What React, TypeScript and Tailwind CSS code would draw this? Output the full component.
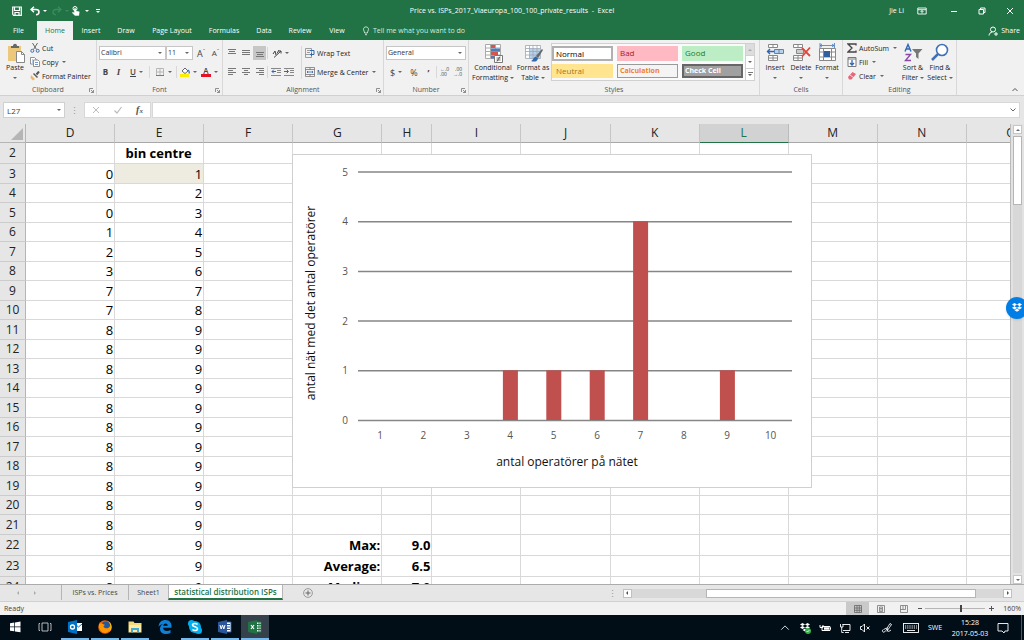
import { useState, type ReactNode } from 'react';

const columns = [
  { name: 'D', width: 'w-[89px]' },
  { name: 'E', width: 'w-[89px]' },
  { name: 'F', width: 'w-[89px]' },
  { name: 'G', width: 'w-[89px]' },
  { name: 'H', width: 'w-[50px]' },
  { name: 'I', width: 'w-[89px]' },
  { name: 'J', width: 'w-[89px]' },
  { name: 'K', width: 'w-[89px]' },
  { name: 'L', width: 'w-[89px]' },
  { name: 'M', width: 'w-[89px]' },
  { name: 'N', width: 'w-[89px]' },
  { name: 'O', width: 'w-[89px]' },
];

const dValues = [0, 0, 0, 1, 2, 3, 7, 7, 8, 8, 8, 8, 8, 8, 8, 8, 8, 8, 8, 8, 8, 8];

const summary: Record<number, [string, string]> = {
  22: ['Max:', '9.0'],
  23: ['Average:', '6.5'],
  24: ['Median:', '7.0'],
};

const ribbonTabs = [
  { name: 'File', width: 'w-[37px]' },
  { name: 'Home', width: 'w-9' },
  { name: 'Insert', width: 'w-9' },
  { name: 'Draw', width: 'w-[34px]' },
  { name: 'Page Layout', width: 'w-[58px]' },
  { name: 'Formulas', width: 'w-[46px]' },
  { name: 'Data', width: 'w-[34px]' },
  { name: 'Review', width: 'w-[38px]' },
  { name: 'View', width: 'w-9' },
];

const sheets = [
  { name: 'ISPs vs. Prices', width: 'w-[67px]' },
  { name: 'Sheet1', width: 'w-10' },
  { name: 'statistical distribution ISPs', width: 'w-[115px]' },
];

// number of networks for each operator count, 1 to 10
const bars = [0, 0, 0, 1, 1, 1, 4, 0, 1, 0];

function Caret({ className = 'text-[#666]' }: { className?: string }) {
  return (
    <svg viewBox="0 0 4 2" className={`w-1 h-0.5 shrink-0 ${className}`}>
      <path d="M0 0h4L2 2z" fill="currentColor" />
    </svg>
  );
}

function Icon({ size = 'size-3', box = 12, children }: { size?: string; box?: number; children: ReactNode }) {
  return (
    <svg viewBox={`0 0 ${box} ${box}`} className={`shrink-0 ${size}`} fill="none" stroke="currentColor">
      {children}
    </svg>
  );
}

function Group({ label, width, launcher = false, children }: { label: string; width: string; launcher?: boolean; children: ReactNode }) {
  return (
    <section className={`flex flex-col shrink-0 border-r border-[#d8d8d8] ${width}`}>
      <div className="flex h-[45px]">{children}</div>
      <div className="relative h-[11px] text-center leading-[11px] text-[#555]">
        {label}
        {launcher && (
          <button type="button" aria-label={`${label} settings`} className="absolute right-0.5 top-1">
            <Icon size="size-[5px]" box={5}>
              <path d="M.5 4V.5H4M2 2l2.5 2.5M4.5 2v2.5H2" stroke="#777" strokeWidth=".8" />
            </Icon>
          </button>
        )}
      </div>
    </section>
  );
}

function BigButton({ lines, width, caretBelow = false, icon }: { lines: string[]; width: string; caretBelow?: boolean; icon: ReactNode }) {
  return (
    <button type="button" className={`flex flex-col items-center shrink-0 pt-[3px] ${width}`}>
      {icon}
      {lines.map((line, i) => (
        <span key={line} className="flex items-center gap-0.5 leading-[10px] whitespace-nowrap">
          {line}
          {!caretBelow && i === lines.length - 1 && <Caret />}
        </span>
      ))}
      {caretBelow && <span className="flex h-[9px] items-center"><Caret /></span>}
    </button>
  );
}

function SmallButton({ label, caret = false, icon }: { label: string; caret?: boolean; icon: ReactNode }) {
  return (
    <button type="button" className="flex h-[14px] items-center gap-0.5 whitespace-nowrap">
      {icon}
      {label}
      {caret && <span className="ml-0.5 flex"><Caret /></span>}
    </button>
  );
}

function Tool({ label, width = 'w-[13px]', active = false, children }: { label: string; width?: string; active?: boolean; children: ReactNode }) {
  return (
    <button
      type="button"
      aria-label={label}
      className={`flex h-[14px] items-center justify-center gap-[3px] shrink-0 text-[#444] ${width} ${active ? 'bg-[#c6c6c6]' : ''}`}
    >
      {children}
    </button>
  );
}

function Select({ label, value, width }: { label: string; value: string; width: string }) {
  return (
    <div className={`relative h-[14px] shrink-0 ${width}`}>
      <select aria-label={label} className="block size-full appearance-none border border-[#c6c6c6] bg-white pl-px leading-3 text-[#333]">
        <option>{value}</option>
      </select>
      <span className="pointer-events-none absolute right-1 top-1.5 flex"><Caret /></span>
    </div>
  );
}

function Separator() {
  return <span className="mx-px h-3 w-px shrink-0 bg-[#d8d8d8]" />;
}

function Lines({ d }: { d: string }) {
  return (
    <Icon size="size-2.5" box={10}>
      <path d={d} stroke="#777" />
    </Icon>
  );
}

function TitleBar() {
  return (
    <header className="grid h-[21px] shrink-0 grid-cols-[1fr_auto_1fr] items-center">
      <div className="flex items-center pl-3">
        <button type="button" aria-label="Save" className="w-[18px]">
          <Icon size="size-2.5" box={10}>
            <path d="M.7 1h8.6v8.3H1.7l-1-1zM2.500 1v3.500h5V1M3 9V6.500h4V9" strokeWidth="1.2" />
          </Icon>
        </button>
        <button type="button" aria-label="Undo" className="flex w-[22px] items-center gap-[3px]">
          <Icon size="size-2.5" box={10}>
            <path d="M4 .8 1 3.500l3 2.700M1.200 3.500H6c4 0 4 5 0 5.300" strokeWidth="1.5" />
          </Icon>
          <Caret className="text-white" />
        </button>
        <button type="button" aria-label="Redo" className="flex w-[19px] items-center gap-[3px] text-[#3e8a60]">
          <Icon size="size-2.5" box={10}>
            <path d="m6 .8 3 2.700-3 2.700M8.800 3.500H4c-4 0-4 5 0 5.300" strokeWidth="1.3" />
          </Icon>
          <Caret className="text-[#3e8a60]" />
        </button>
        <button type="button" aria-label="Touch mode" className="flex w-[25px] items-center gap-1">
          <Icon size="size-2.5" box={10}>
            <circle cx="4" cy="2.5" r="2" />
            <path d="M3.300 2.500h1.500V5l3.500.8-.5 3.700H4L1.200 6.800l.8-.6 1.300.8z" fill="currentColor" strokeWidth=".4" />
          </Icon>
          <Caret className="text-white" />
        </button>
        <button type="button" aria-label="Customize" className="flex flex-col items-center gap-px">
          <span className="h-px w-1 bg-white" />
          <Caret className="text-white" />
        </button>
      </div>
      <h1>Price vs. ISPs_2017_Viaeuropa_100_100_private_results&nbsp; -&nbsp; Excel</h1>
      <div className="flex items-center justify-end">
        <span>Jie Li</span>
        <button type="button" aria-label="Ribbon options" className="flex w-9 justify-center">
          <Icon size="size-2.5" box={10}>
            <path d="M.8 2h8.400v6H.8zM.8 3.700h8.400M5 7.500v-3M3.500 6 5 4.500 6.500 6" strokeWidth=".9" />
          </Icon>
        </button>
        <button type="button" aria-label="Minimize" className="flex w-7 justify-center">
          <Icon size="size-2" box={8}><path d="M1 4.500h6" /></Icon>
        </button>
        <button type="button" aria-label="Restore" className="flex w-7 justify-center">
          <Icon size="size-2" box={8}><path d="M1 2.500h4.500V7H1zM2.500 2.500V1H7v4.500H5.500" /></Icon>
        </button>
        <button type="button" aria-label="Close" className="flex w-7 justify-center">
          <Icon size="size-2" box={8}><path d="m1 1 6 6M7 1 1 7" /></Icon>
        </button>
      </div>
    </header>
  );
}

function RibbonTabs() {
  return (
    <nav className="flex h-[19px] shrink-0 items-stretch">
      {ribbonTabs.map((tab) => (
        <button
          key={tab.name}
          type="button"
          className={`shrink-0 whitespace-nowrap ${tab.width} ${tab.name === 'Home' ? 'bg-[#f1f1f1] text-[#217346]' : ''}`}
        >
          {tab.name}
        </button>
      ))}
      <button type="button" className="ml-1.5 flex items-center gap-0.5 text-[#d8eadf]">
        <Icon size="size-2.5" box={10}>
          <path d="M3.700 7C3.700 5.500 2.500 5 2.500 3.300c0-3.200 5-3.200 5 0C7.500 5 6.300 5.500 6.300 7zM4 8.700h2" strokeWidth=".9" />
        </Icon>
        Tell me what you want to do
      </button>
      <button type="button" className="ml-auto flex items-center gap-[3px] pr-1">
        <Icon size="size-2.5" box={10}>
          <circle cx="5" cy="3.5" r="2.5" />
          <path d="M1 9.500c.2-2 1.500-3.200 3.200-3.500M6 8h4M8 6v4" />
        </Icon>
        Share
      </button>
    </nav>
  );
}

function ClipboardGroup() {
  return (
    <Group label="Clipboard" width="w-[97px]" launcher>
      <BigButton
        lines={['Paste']}
        width="w-[30px]"
        caretBelow
        icon={
          <svg viewBox="0 0 20 20" className="size-5 shrink-0">
            <path d="M3 3h13v15H3z" fill="#edc77b" />
            <path d="M6 5V3h2C8 0 12 0 12 3h2v2z" fill="#666" />
            <path d="M11.500 8.500h5l3 3v8h-8z" fill="#fff" stroke="#888" />
            <path d="M16.500 8.500v3h3" fill="none" stroke="#888" />
          </svg>
        }
      />
      <div className="flex flex-col items-start pt-px">
        <SmallButton
          label="Cut"
          icon={
            <Icon size="size-2.5" box={10}>
              <path d="m2.500 0 4 6.500M7.500 0l-4 6.500" stroke="#666" />
              <circle cx="2.3" cy="7.8" r="1.5" stroke="#3f6fae" />
              <circle cx="7.7" cy="7.8" r="1.5" stroke="#3f6fae" />
            </Icon>
          }
        />
        <SmallButton
          label="Copy"
          caret
          icon={
            <Icon size="size-2.5" box={10}>
              <path d="M.5.5h4l1.500 1.500v5H.5z" fill="#fff" stroke="#777" strokeWidth=".8" />
              <path d="M3.500 3h4.500l1.500 1.500v5h-6z" fill="#fff" stroke="#777" strokeWidth=".8" />
              <path d="M5 5.500h3M5 7.500h3M2 3h1M2 5h1" stroke="#4d7ebf" strokeWidth=".8" />
            </Icon>
          }
        />
        <SmallButton
          label="Format Painter"
          icon={
            <Icon size="size-2.5" box={10}>
              <path d="m1 4 4 4-2 1.500L.5 7z" fill="#edb765" stroke="none" />
              <path d="m3 3 4 4 1-1-4-4z" fill="#555" stroke="none" />
              <path d="m6.500 3.500 2.500-3" stroke="#555" strokeWidth="2" />
            </Icon>
          }
        />
      </div>
    </Group>
  );
}

function FontGroup() {
  return (
    <Group label="Font" width="w-[126px]" launcher>
      <div className="flex flex-col gap-[5px] pl-0.5 pt-1.5">
        <div className="flex">
          <Select label="Font family" value="Calibri" width="w-[67px]" />
          <Select label="Font size" value="11" width="w-[27px]" />
          <Tool label="Increase font size" width="w-4">
            <span className="text-[9px]">A</span><span className="-ml-[3px] mb-1 text-[6px] text-[#3f6fae]">ˆ</span>
          </Tool>
          <Tool label="Decrease font size">
            <span className="text-[8px]">A</span><span className="-ml-[3px] mb-1 text-[6px] text-[#3f6fae]">ˇ</span>
          </Tool>
        </div>
        <div className="flex items-center">
          <Tool label="Bold"><b className="text-[8px]">B</b></Tool>
          <Tool label="Italic"><i className="font-['Liberation_Serif'] text-[9px] font-bold">I</i></Tool>
          <Tool label="Underline" width="w-[23px]"><span className="text-[8px] font-semibold underline">U</span><Caret /></Tool>
          <Separator />
          <Tool label="Borders" width="w-6">
            <Icon size="size-2.5" box={10}>
              <path d="M1.500 1.500h7v7h-7zM5 1.500v7M1.500 5h7" stroke="#aaa" strokeWidth=".8" />
              <path d="M1 8.500h8" stroke="#777" />
            </Icon>
            <Caret />
          </Tool>
          <Separator />
          <Tool label="Fill color" width="w-[21px]">
            <Icon size="size-2.5" box={10}>
              <path d="m2 4 3-3 3 3-3 2.500z" fill="#fff" stroke="#666" />
              <path d="M8 3c1.500 1 1.500 2 1 3.500" stroke="#3f6fae" strokeWidth="1.3" />
              <path d="M0 8.500h9" stroke="#ffed00" strokeWidth="3" />
            </Icon>
            <Caret />
          </Tool>
          <Tool label="Font color" width="w-[21px]">
            <span className="w-2.5 border-b-[3px] border-[#e81123] text-[8px] leading-[7px] font-semibold">A</span>
            <Caret />
          </Tool>
        </div>
      </div>
    </Group>
  );
}

function AlignmentGroup() {
  return (
    <Group label="Alignment" width="w-[161px]" launcher>
      <div className="flex flex-col gap-[5px] pl-0.5 pt-1.5">
        <div className="flex items-center">
          <Tool label="Top align" width="w-[14px]"><Lines d="M1 1.500h8M2 3.500h6M1 5.500h8" /></Tool>
          <Tool label="Middle align" width="w-[14px]"><Lines d="M1 2.500h8M1 4.500h8M1 6.500h8" /></Tool>
          <Tool label="Bottom align" active><Lines d="M1 4.500h8M2 6.500h6M1 8.500h8" /></Tool>
          <Separator />
          <Tool label="Orientation" width="w-[23px]">
            <Icon size="size-2.5" box={10}>
              <path d="m1 6 2-3 1 4M5 5.500 7 2M2 9.500 9 3M6.500 3H9v2.500" stroke="#444" />
            </Icon>
            <Caret />
          </Tool>
        </div>
        <div className="flex items-center">
          <Tool label="Align left" width="w-[14px]"><Lines d="M1 1.500h8M1 3.500h5M1 5.500h8M1 7.500h5" /></Tool>
          <Tool label="Center" width="w-[14px]"><Lines d="M1 1.500h8M3 3.500h4M1 5.500h8M3 7.500h4" /></Tool>
          <Tool label="Align right"><Lines d="M1 1.500h8M4 3.500h5M1 5.500h8M4 7.500h5" /></Tool>
          <Separator />
          <Tool label="Decrease indent">
            <Icon size="size-2.5" box={10}>
              <path d="M0 1.500h10M6 3.500h4M6 5.500h4M0 8.500h10" stroke="#888" />
              <path d="M5 4.500H1M2.800 2.700 1 4.500l1.800 1.800" stroke="#2f67b1" />
            </Icon>
          </Tool>
          <Tool label="Increase indent">
            <Icon size="size-2.5" box={10}>
              <path d="M0 1.500h10M6 3.500h4M6 5.500h4M0 8.500h10" stroke="#888" />
              <path d="M0 4.500h4M2.700 2.700l1.800 1.800-1.800 1.800" stroke="#2f67b1" />
            </Icon>
          </Tool>
        </div>
      </div>
      <div className="mt-1.5 ml-1.5 flex h-[33px] flex-col items-start gap-[5px] border-l border-[#d8d8d8] pl-[3px]">
        <SmallButton
          label="Wrap Text"
          icon={
            <Icon size="size-2.5" box={10}>
              <path d="M.5.5h6v9h-6zM2 2.500h3M2 4.500h3M.5 6.500h6" stroke="#888" strokeWidth=".8" />
              <path d="M5 2.500h4v4H5.500M7 5 5.500 6.500 7 8" stroke="#2f67b1" />
            </Icon>
          }
        />
        <SmallButton
          label="Merge & Center"
          caret
          icon={
            <Icon size="size-2.5" box={10}>
              <path d="M.5.5h9v9h-9zM.5 2.500h9M.5 7.500h9M5 .5v2M5 7.500v2" stroke="#777" strokeWidth=".8" />
              <path d="M2 5h6M3 4 2 5l1 1M7 4l1 1-1 1" stroke="#2f67b1" strokeWidth=".8" />
            </Icon>
          }
        />
      </div>
    </Group>
  );
}

function NumberGroup() {
  return (
    <Group label="Number" width="w-[85px]" launcher>
      <div className="flex flex-col gap-[5px] pl-0.5 pt-1.5">
        <Select label="Number format" value="General" width="w-[80px]" />
        <div className="flex items-center">
          <Tool label="Accounting format" width="w-5"><span className="text-[9px]">$</span><Caret /></Tool>
          <Tool label="Percent style" width="w-4"><span className="text-[9px]">%</span></Tool>
          <Tool label="Comma style"><b className="text-[9px] leading-[9px]">’</b></Tool>
          <Separator />
          <Tool label="Increase decimal">
            <span className="text-left text-[5px] leading-[5px]"><span className="text-[#2f67b1]">←</span>.0<br />.00</span>
          </Tool>
          <Tool label="Decrease decimal">
            <span className="text-right text-[5px] leading-[5px]">.00<br /><span className="text-[#2f67b1]">→</span>.0</span>
          </Tool>
        </div>
      </div>
    </Group>
  );
}

function StylesGroup() {
  return (
    <Group label="Styles" width="w-[291px]">
      <BigButton
        lines={['Conditional', 'Formatting']}
        width="w-12"
        icon={
          <svg viewBox="0 0 20 20" className="size-5 shrink-0" fill="none">
            <path d="M2.500 1.500h15v14h-15z" fill="#fff" />
            <path d="M2.500 1.500h15v14h-15zM2.500 5h15M2.500 8.500h15M2.500 12h15M7.500 1.500v14M12.500 1.500v14" stroke="#aaa" />
            <path d="M8 2h4v3H8zM8 9h7v3H8z" fill="#d9534a" />
            <path d="M8 5.500h9v3H8zM8 12.500h3v3H8z" fill="#4a7ebb" />
            <path d="M11.500 12.500h8v7h-8z" fill="#fff" stroke="#777" />
            <path d="M13.500 15h4M13.500 17h4M17 13.500l-3 5" stroke="#444" strokeWidth=".8" />
          </svg>
        }
      />
      <BigButton
        lines={['Format as', 'Table']}
        width="w-8"
        icon={
          <svg viewBox="0 0 20 20" className="size-5 shrink-0" fill="none">
            <path d="M2.500 2.500h15v13h-15z" fill="#fff" />
            <path d="M7 6h10v10H7z" fill="#b9d1ea" />
            <path d="M2.500 2.500h15v13h-15zM2.500 5.500h15M2.500 8.500h15M2.500 12h15M6.500 2.500v13M10 2.500v13M14 2.500v13" stroke="#9aa7b5" strokeWidth=".8" />
            <path d="m13 13 6-7 1 1-5 8z" fill="#666" />
            <path d="M8 18c2 0 2-4 5-4.500l2 2C14 19 11 19 8 18z" fill="#2f67b1" />
          </svg>
        }
      />
      <div className="ml-0.5 mt-[3px] flex h-[38px] flex-1 mr-1 border border-[#d0d0d0] bg-[#fafafa]">
        <div className="grid flex-1 grid-cols-3 grid-rows-2 gap-x-1 gap-y-[3px] py-0.5 pr-0.5 text-[8px] leading-3">
          <button type="button" className="border-2 border-[#b0b0b0] bg-white pl-0.5 text-left text-black">Normal</button>
          <button type="button" className="bg-[#ffb9c2] pl-[3px] text-left text-[#a21c2a]">Bad</button>
          <button type="button" className="bg-[#bdedc4] pl-[3px] text-left text-[#1e7a28]">Good</button>
          <button type="button" className="bg-[#ffe58f] pl-1 text-left text-[#a8731a]">Neutral</button>
          <button type="button" className="border border-[#9a9a9a] bg-[#f4f4f4] pl-0.5 text-left text-[7px] font-bold text-[#f08030]">Calculation</button>
          <button type="button" className="border-2 border-[#666] bg-[#a0a0a0] pl-px text-left text-[7px] leading-2.5 font-bold text-white">Check Cell</button>
        </div>
        <div className="flex w-[9px] flex-col border-l border-[#d0d0d0]">
          <button type="button" aria-label="Previous styles" className="flex flex-1 items-center justify-center bg-[#ddd]"><Caret className="rotate-180 text-[#aaa]" /></button>
          <button type="button" aria-label="Next styles" className="flex flex-1 items-center justify-center border-y border-[#d0d0d0] bg-white"><Caret /></button>
          <button type="button" aria-label="More styles" className="flex flex-1 flex-col items-center justify-center gap-px bg-white">
            <span className="h-px w-[5px] bg-[#777]" />
            <Caret />
          </button>
        </div>
      </div>
    </Group>
  );
}

function CellsGroup() {
  return (
    <Group label="Cells" width="w-[83px]">
      <div className="flex pl-0.5">
        <BigButton
          lines={['Insert']}
          width="w-[26px]"
          caretBelow
          icon={
            <svg viewBox="0 0 20 20" className="size-5 shrink-0" fill="none" stroke="#888">
              <path d="M3.500 1.500h9v3h-9zM8 1.500v3M3.500 12.500h9v5h-9zM8 12.500v5M3.500 15h9" fill="#fff" />
              <path d="M9.500 6.500h9v4h-9zM14 6.500v4" fill="#b9d1ea" stroke="#5b84b5" />
              <path d="M9 8.500H2M5 6 2.500 8.500 5 11" stroke="#2f67b1" strokeWidth="1.4" />
            </svg>
          }
        />
        <BigButton
          lines={['Delete']}
          width="w-[26px]"
          caretBelow
          icon={
            <svg viewBox="0 0 20 20" className="size-5 shrink-0" fill="none" stroke="#888">
              <path d="M2.500 1.500h9v3h-9zM7 1.500v3M2.500 12.500h9v5h-9zM7 12.500v5M2.500 15h9" fill="#fff" />
              <path d="M5.500 6.500h7v4h-7z" fill="#ccc" />
              <path d="m11 5 8 8M19 4.500l-8 9" stroke="#e0453a" strokeWidth="1.8" />
            </svg>
          }
        />
        <BigButton
          lines={['Format']}
          width="w-[26px]"
          caretBelow
          icon={
            <svg viewBox="0 0 20 20" className="size-5 shrink-0" fill="none" stroke="#888">
              <path d="M2.500 5.500h16v12h-16zM2.500 9h16M2.500 14h16M6.500 5.500v12M14.500 5.500v12" fill="#fff" />
              <path d="M7 8h6v6H7z" fill="#2f5f9f" stroke="none" />
              <path d="M3 2.500h14M5 1 3 2.500 5 4M15 1l2 1.500L15 4M3 0v5M17.500 0v5" stroke="#3f7ac0" strokeWidth=".8" />
            </svg>
          }
        />
      </div>
    </Group>
  );
}

function EditingGroup() {
  return (
    <Group label="Editing" width="w-[114px]">
      <div className="flex w-14 flex-col items-start pl-1 pt-px">
        <SmallButton
          label="AutoSum"
          caret
          icon={<Icon size="size-2.5" box={10}><path d="M9 2.500V1H1l4 4-4 4h8V7.500" stroke="#444" strokeWidth="1.3" /></Icon>}
        />
        <SmallButton
          label="Fill"
          caret
          icon={
            <Icon size="size-2.5" box={10}>
              <path d="M1 .5h8v9H1zM1 2h8" stroke="#777" fill="#fff" />
              <path d="M5 3v5M3 6l2 2 2-2" stroke="#2f67b1" strokeWidth="1.3" />
            </Icon>
          }
        />
        <SmallButton
          label="Clear"
          caret
          icon={
            <Icon size="size-2.5" box={10}>
              <path d="m1 6 4.500-5L9 3 4.500 8.500H2z" fill="#e6677c" stroke="none" />
              <path d="M3 4l3.500 2.500" stroke="#fff" strokeWidth=".7" />
            </Icon>
          }
        />
      </div>
      <BigButton
        lines={['Sort &', 'Filter']}
        width="w-7"
        icon={
          <svg viewBox="0 0 20 20" className="size-5 shrink-0" fill="none">
            <path d="m2 8.500 3-7 3 7M3 6h4" stroke="#2f67b1" strokeWidth="1.4" />
            <path d="M2.500 11.500h5l-5 6h5.500" stroke="#8a49a8" strokeWidth="1.4" />
            <path d="M9 6h10.500l-4 4.500V16L13 14v-3.500z" fill="#777" />
          </svg>
        }
      />
      <BigButton
        lines={['Find &', 'Select']}
        width="w-[26px]"
        icon={
          <svg viewBox="0 0 20 20" className="size-5 shrink-0" fill="none" stroke="#3f72b5">
            <circle cx="12" cy="7" r="5.5" fill="#fff" strokeWidth="1.6" />
            <path d="m8 11-6 6" strokeWidth="2.5" />
          </svg>
        }
      />
    </Group>
  );
}

function FormulaBar() {
  return (
    <div className="flex h-7 shrink-0 items-center bg-[#e6e6e6] pl-[3px] pr-1 text-[#555]">
      <div className="relative h-4 w-[62px] shrink-0">
        <input aria-label="Name box" defaultValue="L27" className="block size-full border border-[#d0d0d0] bg-white pl-[3px] text-[8px] text-[#444]" />
        <span className="pointer-events-none absolute right-1 top-[7px] flex"><Caret /></span>
      </div>
      <span className="w-[19px] shrink-0 text-center text-[9px] text-[#999]">⋮</span>
      <div className="flex h-4 w-[67px] shrink-0 items-center justify-around border border-[#d8d8d8] bg-white">
        <button type="button" aria-label="Cancel"><Icon size="size-2" box={8}><path d="m1 1 6 6M7 1 1 7" stroke="#bbb" /></Icon></button>
        <button type="button" aria-label="Enter"><Icon size="size-2" box={8}><path d="m.5 4.500 2.500 2.500 4.500-6" stroke="#bbb" strokeWidth="1.2" /></Icon></button>
        <button type="button" aria-label="Insert function" className="font-['Liberation_Serif'] text-[10px] leading-3 font-bold italic">
          f<span className="text-[7px]">x</span>
        </button>
      </div>
      <div className="relative ml-px h-4 flex-1">
        <input aria-label="Formula" className="block size-full border border-[#d8d8d8] bg-white px-1 text-[8px]" />
        <svg viewBox="0 0 6 4" className="pointer-events-none absolute right-1 top-1.5 h-1 w-1.5" fill="none" stroke="#666">
          <path d="m.5.5 2.500 2.500L5.500.5" />
        </svg>
      </div>
    </div>
  );
}

function Chart() {
  return (
    <svg viewBox="0 0 518 332" className="absolute left-[292px] top-[30px] h-[334px] w-[520px] border border-[#d0d0d0] bg-white font-['Open_Sans']">
      {bars.map((count, i) => (
        <g key={i}>
          <text x={87 + i * 43.4} y="284" textAnchor="middle" fontSize="10" fill="#555">{i + 1}</text>
        </g>
      ))}
      {[0, 1, 2, 3, 4, 5].map((n) => (
        <g key={n}>
          <path d={`M65 ${265.5 - n * 49.7}h434`} stroke="#868686" strokeWidth="1.5" />
          <text x="55" y={269 - n * 49.7} textAnchor="end" fontSize="10" fill="#555">{n}</text>
        </g>
      ))}
      {bars.map((count, i) => count > 0 && (
        <rect key={i} x={79.7 + i * 43.4} y={265 - count * 49.7} width="15" height={count * 49.7} fill="#c0504d" />
      ))}
      <text x="274" y="311" textAnchor="middle" fontSize="12" fill="#111">antal operatörer på nätet</text>
      <text x="0" y="0" textAnchor="middle" fontSize="12" fill="#111" transform="translate(22 148) rotate(-90)">
        antal nät med det antal operatörer
      </text>
    </svg>
  );
}

function SheetGrid() {
  const rows = Array.from({ length: 23 }, (_, i) => i + 2);

  const cellText = (col: string, row: number) => {
    if (col === 'D' && row > 2) return dValues[row - 3];
    if (col === 'E') return row === 2 ? 'bin centre' : Math.min(row - 2, 9);
    if (col === 'G') return summary[row]?.[0];
    if (col === 'H') return summary[row]?.[1];
    return null;
  };

  const rowHeight = (row: number) => {
    if (row === 2 || row > 21) return 'h-[21px]';
    return row % 2 ? 'h-5' : 'h-[19px]';
  };

  return (
    <div className="relative flex-1 overflow-hidden border-r border-[#bbb]">
      <table className="w-[1056px] table-fixed border-separate border-spacing-0 text-[13px] leading-[18px] text-black">
        <thead>
          <tr className="h-[19px] bg-[#e6e6e6] text-[12px] text-[#222]">
            <th className="w-[26px] border-r border-b border-[#b5b5b5] p-0">
              <svg viewBox="0 0 13 13" className="mt-0.5 ml-auto mr-0.5 size-3"><path d="M13 0v13H0z" fill="#b5b5b5" /></svg>
            </th>
            {columns.map((col) => (
              <th
                key={col.name}
                className={`border-r border-b p-0 font-normal ${col.width} ${
                  col.name === 'L' ? 'border-r-[#bbb] border-b-[#217346] bg-[#d2d2d2] text-[#217346]' : 'border-r-[#c6c6c6] border-b-[#a8a8a8]'
                }`}
              >
                {col.name}
              </th>
            ))}
          </tr>
        </thead>
        <tbody>
          {rows.map((row) => (
            <tr key={row} className={rowHeight(row)}>
              <th className="border-r border-b border-r-[#b5b5b5] border-b-[#ccc] bg-[#e6e6e6] p-0 text-[12px] font-normal text-[#222]">{row}</th>
              {columns.map((col) => (
                <td
                  key={col.name}
                  className={`border-r border-b border-[#d9d9d9] p-0 pr-px ${row === 2 ? 'text-center' : 'text-right'} ${
                    row === 2 || col.name === 'G' || col.name === 'H' ? 'font-bold' : ''
                  } ${col.name === 'E' && row === 3 ? 'bg-[#eeece1]' : ''}`}
                >
                  {cellText(col.name, row)}
                </td>
              ))}
            </tr>
          ))}
        </tbody>
      </table>
      <Chart />
    </div>
  );
}

function ScrollBar() {
  return (
    <div className="flex w-[13px] shrink-0 flex-col items-center gap-0.5 bg-[#e2e2e2] pt-px">
      <button type="button" aria-label="Scroll up" className="flex h-[9px] w-[9px] items-center justify-center border border-[#c6c6c6] bg-white"><Caret className="rotate-180 text-[#666]" /></button>
      <div className="w-[9px] flex-1 bg-[#d8d8d8]">
        <div className="h-[69px] border border-[#b5b5b5] bg-white" />
      </div>
      <button type="button" aria-label="Scroll down" className="flex h-[9px] w-[9px] items-center justify-center border border-[#c6c6c6] bg-white"><Caret /></button>
    </div>
  );
}

function SheetTabs() {
  const [active, setActive] = useState(sheets[2].name);

  return (
    <div className="flex h-[17px] shrink-0 items-center border-t border-[#ababab] bg-[#e6e6e6] text-[#444]">
      <div className="flex w-[61px] shrink-0 justify-center gap-[13px] pr-2 text-[#aaa]">
        <button type="button" aria-label="Previous sheet"><Icon size="size-1" box={4}><path d="M3 0v4L1 2z" fill="currentColor" stroke="none" /></Icon></button>
        <button type="button" aria-label="Next sheet"><Icon size="size-1" box={4}><path d="M1 0v4l2-2z" fill="currentColor" stroke="none" /></Icon></button>
      </div>
      {sheets.map((sheet) => (
        <button
          key={sheet.name}
          type="button"
          onClick={() => setActive(sheet.name)}
          className={`h-[15px] shrink-0 self-start border-l border-[#b5b5b5] whitespace-nowrap ${sheet.width} ${
            sheet.name === active ? 'border-r border-b-2 border-b-[#217346] bg-white text-[8px] font-semibold text-[#217346]' : ''
          }`}
        >
          {sheet.name}
        </button>
      ))}
      <button type="button" aria-label="New sheet" className="ml-5">
        <Icon size="size-2.5" box={10}>
          <circle cx="5" cy="5" r="4.4" stroke="#888" strokeWidth=".8" />
          <path d="M5 2.500v5M2.500 5h5" stroke="#666" />
        </Icon>
      </button>
      <span className="ml-auto w-5 text-center text-[9px] text-[#999]">⋮</span>
      <div className="mr-3 flex h-[9px] w-[38%] items-stretch bg-[#d8d8d8]">
        <button type="button" aria-label="Scroll left" className="flex w-[9px] items-center justify-center border border-[#c0c0c0] bg-white"><Caret className="rotate-90 text-[#555]" /></button>
        <div className="ml-[74px] w-[270px] border border-[#b5b5b5] bg-white" />
        <button type="button" aria-label="Scroll right" className="ml-auto flex w-[9px] items-center justify-center border border-[#c0c0c0] bg-white"><Caret className="-rotate-90 text-[#555]" /></button>
      </div>
    </div>
  );
}

function StatusBar() {
  return (
    <footer className="flex h-[14px] shrink-0 items-center border-t border-[#d0d0d0] bg-[#f1f1f1] pl-1 pr-[3px] text-[#444]">
      <span>Ready</span>
      <div className="ml-auto flex h-full items-center">
        <button type="button" aria-label="Normal view" className="flex h-full w-[23px] items-center justify-center bg-[#c9c9c9]">
          <Icon size="size-2" box={8}><path d="M.5.5h7v7h-7zM.5 3h7M.5 5.300h7M3 .5v7M5.300.5v7" stroke="#666" strokeWidth=".8" /></Icon>
        </button>
        <button type="button" aria-label="Page layout" className="flex h-full w-[23px] items-center justify-center">
          <Icon size="size-2" box={8}><path d="M.5.5h7v7h-7zM2.500 2h3v4.500h-3zM3 3.500h2M3 5h2" stroke="#777" strokeWidth=".8" /></Icon>
        </button>
        <button type="button" aria-label="Page break preview" className="flex h-full w-[23px] items-center justify-center">
          <Icon size="size-2" box={8}><path d="M.5.5h7v7h-7zM3 .5v4H.5M5.500.5v4H3" stroke="#777" strokeWidth=".8" /></Icon>
        </button>
        <button type="button" aria-label="Zoom out" className="flex w-2.5 justify-center"><span className="h-px w-1 bg-[#555]" /></button>
        <input
          type="range"
          aria-label="Zoom"
          min={0}
          max={100}
          defaultValue={60}
          className="h-[7px] w-[60px] appearance-none bg-[linear-gradient(#b5b5b5,#b5b5b5)] bg-[length:100%_1px] bg-center bg-no-repeat [&::-webkit-slider-thumb]:h-[7px] [&::-webkit-slider-thumb]:w-0.5 [&::-webkit-slider-thumb]:appearance-none [&::-webkit-slider-thumb]:bg-[#444]"
        />
        <button type="button" aria-label="Zoom in" className="flex w-3 justify-center">
          <Icon size="size-[5px]" box={5}><path d="M2.500 0v5M0 2.500h5" stroke="#555" /></Icon>
        </button>
        <span className="w-6 text-right">160%</span>
      </div>
    </footer>
  );
}

function TaskButton({ label, open = false, active = false, children }: { label: string; open?: boolean; active?: boolean; children: ReactNode }) {
  return (
    <button
      type="button"
      aria-label={label}
      className={`mx-px flex w-7 items-center justify-center border-b-2 ${open ? 'border-[#76b9ed]' : 'border-transparent'} ${active ? 'bg-[#36424b]' : ''}`}
    >
      <svg viewBox="0 0 16 16" className="size-4" fill="none">{children}</svg>
    </button>
  );
}

function TaskBar() {
  return (
    <footer className="flex h-[25px] shrink-0 items-stretch bg-[#010d17] text-white">
      <TaskButton label="Start">
        <path d="M3 4.200 7.300 3.500v4H3zM8 3.400l5.500-.8v4.900H8zM3 8.300h4.300v4L3 11.700zM8 8.300h5.500v5L8 12.500z" fill="#fff" />
      </TaskButton>
      <TaskButton label="Task view">
        <path d="M5 4h6v8H5zM3 4.500H2v7h1M13 4.500h1v7h-1" stroke="#ccc" strokeWidth=".9" />
      </TaskButton>
      <TaskButton label="Outlook" open>
        <path d="M8 4h7v8H8z" fill="#fff" />
        <path d="m8 5 3.500 3L15 5" stroke="#0072c6" />
        <path d="M1 3l9-2v14l-9-2z" fill="#0072c6" />
        <circle cx="5.5" cy="8" r="2" stroke="#fff" strokeWidth="1.3" />
      </TaskButton>
      <TaskButton label="Firefox" open>
        <circle cx="8" cy="8" r="6.8" fill="#e66000" />
        <circle cx="8.8" cy="7" r="4.6" fill="#2557a0" />
        <path d="M2 5c2-2 4 0 6 1-2 1-2 2 0 3 2 .8 4 0 5-2 1 4-2 7-5 7s-7-4-6-9z" fill="#ff9500" />
        <path d="M11 2c4 2 5 8 1 11 2-4 2-8-1-11z" fill="#ffcb00" />
      </TaskButton>
      <TaskButton label="File Explorer" open>
        <path d="M1.500 2.500h5l1 1.500h7v9.500h-13z" fill="#f5d77b" />
        <path d="M2 6h12v7H2z" fill="#ffe9a3" />
        <path d="M4 13.500V9h8v4.500h-2V11H6v2.500z" fill="#3fa9d9" />
      </TaskButton>
      <TaskButton label="Edge">
        <path d="M1.500 7.500C2 3 5 1 8.500 1c4 0 6 3 6 6v1.800H6c.3 3.700 4.800 4 7.500 2.200v3C8.500 16.500 3 14.500 3 9.800 3 7.500 4.200 6 6 5c-1.800.3-3.500 1.300-4.500 2.500zM6.200 6.700h4.500c0-3-4-3-4.500 0z" fill="#0d80d8" />
      </TaskButton>
      <TaskButton label="Skype" open>
        <circle cx="8" cy="8" r="6" fill="#00aff0" />
        <circle cx="4.5" cy="4.5" r="3.5" fill="#00aff0" />
        <circle cx="11.5" cy="11.5" r="3.5" fill="#00aff0" />
        <path d="M10.500 5.500C9.500 4 5.500 4 5.500 6c0 2.200 5 1.500 5 3.800 0 2.200-4 2.200-5 .5" stroke="#fff" strokeWidth="1.6" />
      </TaskButton>
      <TaskButton label="Word" open>
        <path d="M8 3h6v10H8z" fill="#fff" stroke="#2b579a" />
        <path d="M10 5.500h3M10 8h3M10 10.500h3" stroke="#2b579a" />
        <path d="M1 3l9-2v14l-9-2z" fill="#2b579a" />
        <path d="m3 6 1.200 4L5.500 6l1.300 4L8 6" stroke="#fff" />
      </TaskButton>
      <TaskButton label="Excel" open active>
        <path d="M8 3h6v10H8z" fill="#fff" stroke="#217346" />
        <path d="M10 5.500h4M10 8h4M10 10.500h4M12 3v10" stroke="#217346" />
        <path d="M1 3l9-2v14l-9-2z" fill="#217346" />
        <path d="m4 6 3 4M7 6l-3 4" stroke="#fff" strokeWidth="1.2" />
      </TaskButton>
      <div className="ml-auto flex items-center">
        <span className="flex w-5 justify-center"><Icon size="size-2.5"><path d="m1.500 8 4.500-4.500L10.500 8" /></Icon></span>
        <span className="flex w-5 justify-center">
          <Icon>
            <path d="m3.500 1 2.500 1.500L3.500 4 1 2.500zM8.500 1 11 2.500 8.500 4 6 2.500zM3.500 4 6 5.500 3.500 7 1 5.500zM8.500 4 11 5.500 8.500 7 6 5.500zM3.500 8 6 6.500 8.500 8 6 9.500z" fill="#fff" stroke="none" />
            <circle cx="9" cy="9" r="3" fill="#35b34a" stroke="none" />
            <path d="m7.500 9 1 1 2-2" strokeWidth=".8" />
          </Icon>
        </span>
        <span className="flex w-5 justify-center"><Icon><path d="M3 4.500h8v4H3zM11.500 5.500v2M1 3v2.500h3V3" /><path d="M5 6.500h5" strokeWidth="2.5" /></Icon></span>
        <span className="flex w-5 justify-center"><Icon><path d="M3.500 2.500H11v6H4M6 10.500h4M1.500 2v3h2.500V2M2.700 5v5.500h2" strokeWidth=".9" /></Icon></span>
        <span className="flex w-5 justify-center"><Icon><path d="M1.500 4.500h1.500L5.500 2v8L3 7.500H1.500zM7.500 4.500l3 3M10.500 4.500l-3 3" strokeWidth=".9" /></Icon></span>
        <span className="flex w-6 justify-center"><Icon><path d="M2.500 7.500c-2 .5-1 3.500 1 2.500C5.500 8.500 7 4 9 1.500l1.500 1C9 5 7.500 6.500 6 9.500M3 7.500c2-2 4-1.500 3.500.5s2 1.500 3.500 0" strokeWidth=".9" /></Icon></span>
        <svg viewBox="0 0 16 10" className="ml-1 h-2.5 w-4" fill="none" stroke="#fff">
          <rect x=".5" y=".5" width="15" height="9" strokeWidth=".9" />
          <path d="M2 3h12M2 5h12" strokeDasharray="1.200 1" />
          <path d="M4 7.500h8" strokeWidth=".9" />
        </svg>
        <span className="w-8 text-center">SWE</span>
        <div className="w-[38px] text-center leading-[11px] whitespace-nowrap">
          <div>15:28</div>
          <div>2017-05-03</div>
        </div>
        <button type="button" aria-label="Notifications" className="mr-3 ml-2 flex">
          <Icon><path d="M1 1.500h10v7.500H8L7 11 5 9H1z" strokeWidth=".9" /></Icon>
        </button>
        <span className="mr-0.5 h-full w-px bg-[#555]" />
      </div>
    </footer>
  );
}

export default function App() {
  return (
    <div className="relative flex h-screen flex-col overflow-hidden bg-white font-['Open_Sans',sans-serif] text-[7px] leading-none text-[#222]">
      <div className="shrink-0 bg-[#217346] text-white">
        <TitleBar />
        <RibbonTabs />
      </div>
      <div className="flex h-[56px] shrink-0 border-b border-[#d0d0d0] bg-[#f1f1f1]">
        <ClipboardGroup />
        <FontGroup />
        <AlignmentGroup />
        <NumberGroup />
        <StylesGroup />
        <CellsGroup />
        <EditingGroup />
        <button type="button" aria-label="Collapse ribbon" className="mt-auto mr-1.5 mb-0.5 ml-auto">
          <Icon size="size-1.5" box={6}><path d="m.5 4 2.500-2.500L5.500 4" stroke="#555" /></Icon>
        </button>
      </div>
      <FormulaBar />
      <main className="flex min-h-0 flex-1">
        <SheetGrid />
        <ScrollBar />
      </main>
      <SheetTabs />
      <StatusBar />
      <TaskBar />
      <button type="button" aria-label="Dropbox" className="absolute -right-1 top-[297px] flex size-[22px] items-center justify-center rounded-full bg-[#007ee5] text-white shadow">
        <Icon>
          <path d="m3.500 1 2.500 1.600L3.500 4.200 1 2.600zM8.500 1 11 2.600 8.500 4.200 6 2.600zM3.500 4.200 6 5.800 3.500 7.400 1 5.800zM8.500 4.200 11 5.800 8.500 7.400 6 5.800zM3.500 8.200 6 6.600l2.500 1.600L6 9.800z" fill="currentColor" stroke="none" />
        </Icon>
      </button>
    </div>
  );
}
